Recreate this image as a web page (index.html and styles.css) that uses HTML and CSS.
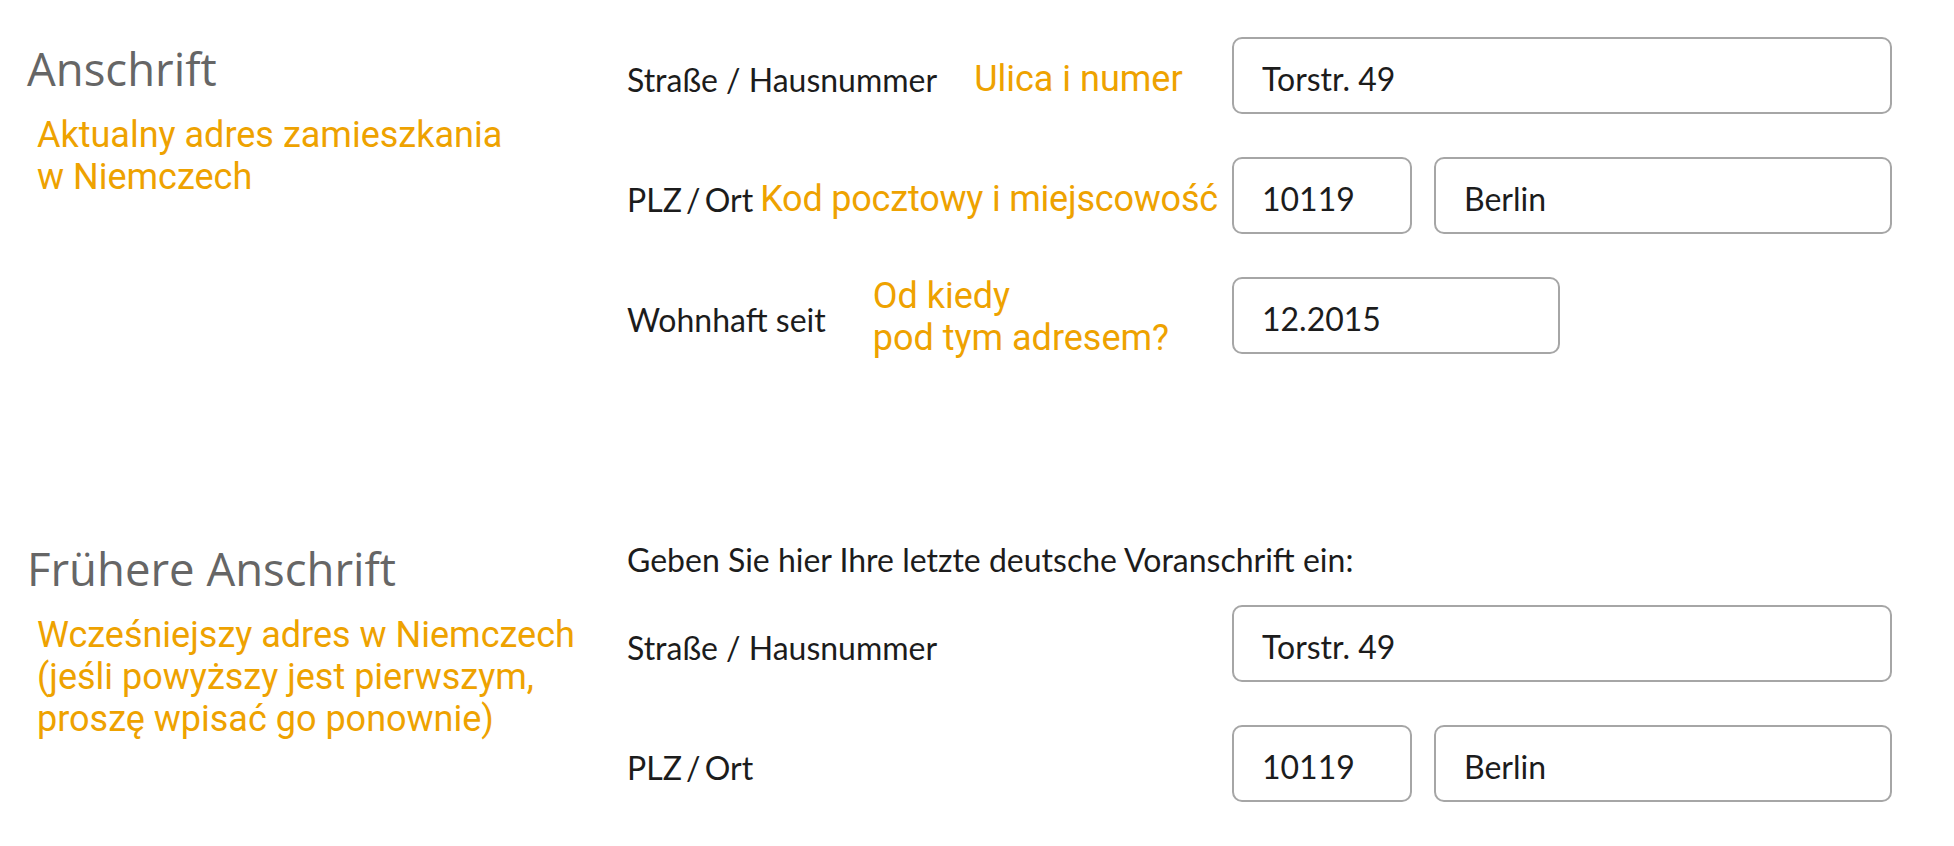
FILE: index.html
```html
<!DOCTYPE html>
<html>
  <head>
    <title>Anschrift</title>
    <link rel="stylesheet" href="styles.css">
  </head>
  <body>
    <section class="block">
      <div class="aside">
        <h2 class="title">Anschrift</h2>
        <p class="hint hint-block">Aktualny adres zamieszkania<br />w Niemczech</p>
      </div>
      <div class="fields">
        <div class="row">
          <div class="label">
            <span>Straße / Hausnummer</span>
            <span class="hint hint-street">Ulica i numer</span>
          </div>
          <div class="inputs">
            <input class="box box-full" type="text" value="Torstr. 49" />
          </div>
        </div>
        <div class="row">
          <div class="label">
            <span class="label-tight">PLZ / Ort</span>
            <span class="hint hint-city">Kod pocztowy i miejscowość</span>
          </div>
          <div class="inputs">
            <input class="box box-zip" type="text" value="10119" />
            <input class="box box-city" type="text" value="Berlin" />
          </div>
        </div>
        <div class="row">
          <div class="label">
            <span>Wohnhaft seit</span>
            <span class="hint hint-since">Od kiedy<br />pod tym adresem?</span>
          </div>
          <div class="inputs">
            <input class="box box-date" type="text" value="12.2015" />
          </div>
        </div>
      </div>
    </section>

    <section class="block block-prev">
      <div class="aside">
        <h2 class="title">Frühere Anschrift</h2>
        <p class="hint hint-block">Wcześniejszy adres w Niemczech<br />(jeśli powyższy jest pierwszym,<br />proszę wpisać go ponownie)</p>
      </div>
      <div class="fields">
        <p class="intro">Geben Sie hier Ihre letzte deutsche Voranschrift ein:</p>
        <div class="row">
          <div class="label">
            <span>Straße / Hausnummer</span>
          </div>
          <div class="inputs">
            <input class="box box-full" type="text" value="Torstr. 49" />
          </div>
        </div>
        <div class="row">
          <div class="label">
            <span class="label-tight">PLZ / Ort</span>
          </div>
          <div class="inputs">
            <input class="box box-zip" type="text" value="10119" />
            <input class="box box-city" type="text" value="Berlin" />
          </div>
        </div>
      </div>
    </section>
  </body>
</html>
```

FILE: styles.css
```css
body {
  margin: 0;
  padding: 37px 0 0 27px;
  font-family: Lato, "Open Sans", sans-serif;
  font-size: 32px;
  color: #1c1c1c;
  background: #fff;
}

.block {
  display: grid;
  grid-template-columns: 600px auto;
  align-items: start;
}

.block-prev {
  margin-top: 183px;
}

.aside {
  width: 600px;
}

.title {
  margin: 3px 0 0;
  font-family: "Open Sans", sans-serif;
  font-weight: 400;
  font-size: 45.5px;
  line-height: 56px;
  color: #666;
}

.hint {
  font-family: Roboto, sans-serif;
  font-size: 36px;
  line-height: 42px;
  color: #eea200;
}

.hint-block {
  margin: 18px 0 0 10px;
}

.fields {
  display: flex;
  flex-direction: column;
  gap: 43px;
}

.intro {
  margin: 3px 0 -18px;
  line-height: 40px;
}

.row {
  display: flex;
  align-items: center;
  height: 77px;
}

.label {
  display: flex;
  align-items: center;
  width: 605px;
  padding-top: 7px;
}

.label-tight {
  word-spacing: -4px;
}

.hint-street {
  margin-left: 37px;
}

.hint-city {
  margin-left: 7px;
  letter-spacing: -0.2px;
}

.hint-since {
  margin-left: 47px;
  margin-top: -5px;
}

.inputs {
  display: flex;
  gap: 22px;
  width: 660px;
}

.box {
  box-sizing: border-box;
  height: 77px;
  padding: 5px 28px 0;
  border: 2px solid #a6a6a6;
  border-radius: 10px;
  font-family: Lato, "Open Sans", sans-serif;
  font-size: 32px;
  color: #1c1c1c;
  background: #fff;
  outline: none;
}

.box-full {
  width: 660px;
}

.box-zip {
  width: 180px;
}

.box-city {
  width: 458px;
}

.box-date {
  width: 328px;
}
```
